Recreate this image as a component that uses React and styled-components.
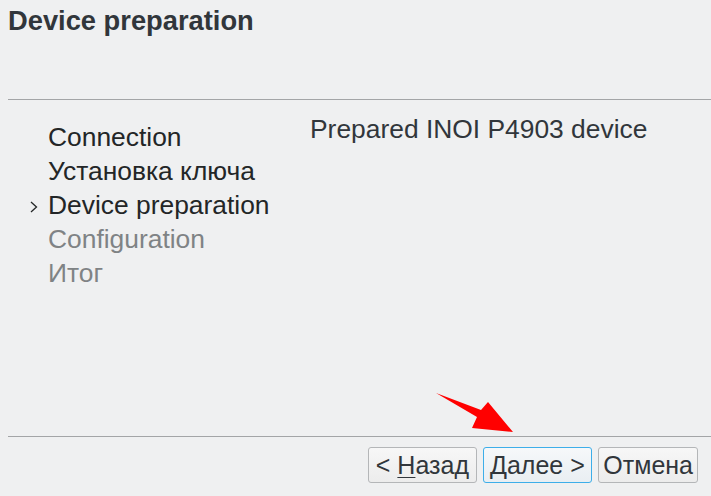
import React from "react";
import styled, { createGlobalStyle } from "styled-components";

const Global = createGlobalStyle`
  html, body { margin: 0; padding: 0; background: #eff0f1; }
  body { font-family: "Liberation Sans", Arial, sans-serif; }
`;

const Window = styled.div`
  position: relative;
  width: 711px;
  height: 496px;
  display: flex;
  flex-direction: column;
  background: #eff0f1;
  color: #232627;
  overflow: hidden;
`;

const Header = styled.div`
  height: 99px;
  padding-left: 8px;
  box-sizing: border-box;
`;

const Title = styled.h1`
  margin: 5px 0 0;
  font-size: 27.3px;
  font-weight: bold;
  line-height: normal;
  color: #31363b;
`;

const Divider = styled.div`
  height: 1px;
  margin-left: 8px;
  background: #a3a5a7;
`;

const Body = styled.div`
  flex: 1;
  display: grid;
  grid-template-columns: 40px 262px 1fr;
  padding: 12px 0 0 8px;
  font-size: 26.4px;
  line-height: 34px;
`;

const StepList = styled.ul`
  grid-column: 1 / span 2;
  list-style: none;
  margin: 8px 0 0;
  padding: 0;
`;

const Step = styled.li`
  position: relative;
  padding-left: 40px;
  color: ${(p) => (p.$done ? "#232627" : "#7f8385")};
  white-space: nowrap;
`;

const Chevron = styled.svg`
  position: absolute;
  left: 22px;
  top: 13px;
`;

const Message = styled.div`
  grid-column: 3;
  color: #31363b;
  white-space: nowrap;
`;

const Footer = styled.div`
  display: flex;
  justify-content: flex-end;
  gap: 6px;
  padding: 10px 13px 13px 0;
`;

const Button = styled.button`
  height: 36px;
  padding: 0 ${(p) => p.$pad ?? 5}px;
  font-family: "Liberation Sans", Arial, sans-serif;
  font-size: 25px;
  line-height: normal;
  color: #31363b;
  border-radius: 3px;
  border: 1px solid ${(p) => (p.$focused ? "#3daee9" : "#b4b6b8")};
  background: ${(p) =>
    p.$focused
      ? "linear-gradient(#f6f8fa, #e9eef2)"
      : "linear-gradient(#f7f7f7, #ececec)"};
  cursor: pointer;
`;

const Mnemonic = styled.span`
  text-decoration: underline;
  text-underline-offset: 3px;
  text-decoration-thickness: 1px;
`;

const Arrow = styled.svg`
  position: absolute;
  left: 0;
  top: 0;
  pointer-events: none;
`;

const steps = [
  { label: "Connection", done: true },
  { label: "Установка ключа", done: true },
  { label: "Device preparation", done: true, current: true },
  { label: "Configuration", done: false },
  { label: "Итог", done: false },
];

export default function App() {
  return (
    <>
      <Global />
      <Window>
        <Header>
          <Title>Device preparation</Title>
        </Header>
        <Divider />
        <Body>
          <StepList>
            {steps.map((s) => (
              <Step key={s.label} $done={s.done}>
                {s.current && (
                  <Chevron width="8" height="12" viewBox="0 0 8 12">
                    <polyline
                      points="1,1 6.5,6 1,11"
                      fill="none"
                      stroke="#232627"
                      strokeWidth="1.3"
                    />
                  </Chevron>
                )}
                {s.label}
              </Step>
            ))}
          </StepList>
          <Message>Prepared INOI P4903 device</Message>
        </Body>
        <Divider />
        <Footer>
          <Button $pad={6.5}>
            &lt; <Mnemonic>Н</Mnemonic>азад
          </Button>
          <Button $pad={6.5} $focused>
            <Mnemonic>Д</Mnemonic>алее &gt;
          </Button>
          <Button $pad={4}>Отмена</Button>
        </Footer>
        <Arrow width="711" height="496" viewBox="0 0 711 496">
          <polygon
            points="436,393 481,410 488,402 513,432 472,428 477,417"
            fill="#ff0000"
          />
        </Arrow>
      </Window>
    </>
  );
}
